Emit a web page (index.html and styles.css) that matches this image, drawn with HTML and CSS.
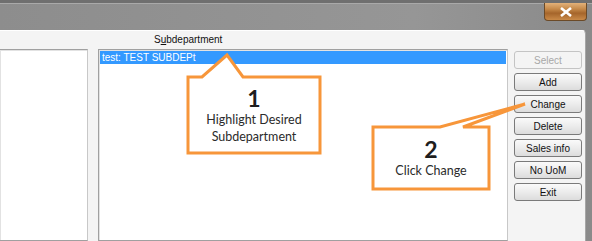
FILE: index.html
```html
<!DOCTYPE html>
<html lang="en">
<head>
    <meta charset="UTF-8" />
    <title>Subdepartment</title>
    <link rel="stylesheet" href="styles.css">
</head>
<body>
    <div class="window">
        <div class="titlebar">
            <div class="close">
                <svg width="16" height="10" viewBox="0 0 16 10">
                    <path d="M3 1 L13 9 M13 1 L3 9" stroke="#fff" stroke-width="2.6" />
                </svg>
            </div>
        </div>

        <div class="client">
            <div class="col-left">
                <div class="listbox"></div>
            </div>

            <div class="col-main">
                <div class="caption">S<u>u</u>bdepartment</div>
                <div class="listbox">
                    <div class="row selected">test: TEST SUBDEPt</div>
                </div>
            </div>

            <div class="col-buttons">
                <button class="btn" disabled>Select</button>
                <button class="btn">Add</button>
                <button class="btn">Change</button>
                <button class="btn">Delete</button>
                <button class="btn">Sales info</button>
                <button class="btn">No UoM</button>
                <button class="btn">Exit</button>
            </div>
        </div>

        <!-- callout outlines drawn over the dialog -->
        <svg class="overlay" width="592" height="241" viewBox="0 0 592 241">
            <path d="M188 77 L202 77 L227 55 L243 77 L320 77 L320 153 L188 153 Z" class="bubble" />
            <path d="M373 127 L440 127 L525 104 L463 127 L489 127 L489 189 L373 189 Z" class="bubble" />
        </svg>

        <div class="note note-one">
            <div class="num">1</div>
            <div>Highlight Desired</div>
            <div>Subdepartment</div>
        </div>
        <div class="note note-two">
            <div class="num">2</div>
            <div>Click Change</div>
        </div>
    </div>
</body>
</html>
```

FILE: styles.css
```css
body {
    margin: 0;
    padding: 0;
    background: #ffffff;
}
.window {
    position: relative;
    width: 592px;
    height: 241px;
    overflow: hidden;
    background: linear-gradient(90deg, #8d8d8d, #969696 70%, #8a8a8a);
    font-family: 'Liberation Sans', Arial, sans-serif;
}
.titlebar {
    height: 30px;
    box-sizing: border-box;
    border-top: 3px solid #6f6f6f;
    box-shadow: inset 0 1px 0 #a9a9a9;
    display: flex;
    justify-content: flex-end;
    padding-right: 5px;
}
.close {
    width: 43px;
    height: 18px;
    box-sizing: border-box;
    border: 1px solid #6b4a28;
    border-top: none;
    border-radius: 0 0 4px 4px;
    background: linear-gradient(#e3b27a 0%, #c68a4a 35%, #a5652b 60%, #c98a48 100%);
    display: flex;
    align-items: center;
    justify-content: center;
}
.client {
    height: 211px;
    margin-right: 6px;
    box-sizing: border-box;
    background: #f4f4f4;
    border-top: 1px solid #ffffff;
    border-right: 1px solid #a6a6a6;
    border-top-right-radius: 4px;
    display: flex;
}
.col-left {
    width: 88px;
    padding-top: 18px;
    margin-right: 10px;
}
.col-main {
    width: 410px;
    display: flex;
    flex-direction: column;
}
.caption {
    height: 18px;
    line-height: 18px;
    font-size: 10px;
    color: #111;
    padding-left: 56px;
}
.listbox {
    height: 100%;
    box-sizing: border-box;
    background: #fff;
    border: 1px solid #a0a0a0;
    border-right-color: #c8c8c8;
    box-shadow: inset 1px 1px 0 #e2e2e2;
    padding: 1px 1px 0 1px;
}
.col-left .listbox {
    border-left: none;
}
.row {
    height: 13px;
    line-height: 13px;
    font-size: 10px;
    padding-left: 2px;
}
.selected {
    background: #3399ff;
    color: #fff;
}
.col-buttons {
    width: 68px;
    margin-left: 6px;
    padding-top: 20px;
    display: flex;
    flex-direction: column;
    gap: 4px;
}
.btn {
    height: 18px;
    padding: 0;
    font-family: 'Liberation Sans', Arial, sans-serif;
    font-size: 10px;
    color: #111;
    border: 1px solid #7a7a7a;
    border-radius: 3px;
    background: linear-gradient(#fafafa, #ececec 50%, #dcdcdc);
}
.btn:disabled {
    color: #a8a8a8;
    border-color: #c4c4c4;
    background: #f4f4f4;
}
.overlay {
    position: absolute;
    top: 0;
    left: 0;
    pointer-events: none;
}
.bubble {
    fill: #ffffff;
    stroke: #f7963a;
    stroke-width: 3;
    stroke-linejoin: miter;
}
.note {
    position: absolute;
    text-align: center;
    font-family: Lato, 'Open Sans', sans-serif;
    font-size: 12.5px;
    line-height: 17px;
    color: #2b2b2b;
}
.num {
    font-size: 23px;
    font-weight: bold;
    line-height: 26px;
    color: #1e1e1e;
}
.note-one {
    left: 188px;
    top: 85px;
    width: 132px;
}
.note-two {
    left: 373px;
    top: 136px;
    width: 116px;
}
```
